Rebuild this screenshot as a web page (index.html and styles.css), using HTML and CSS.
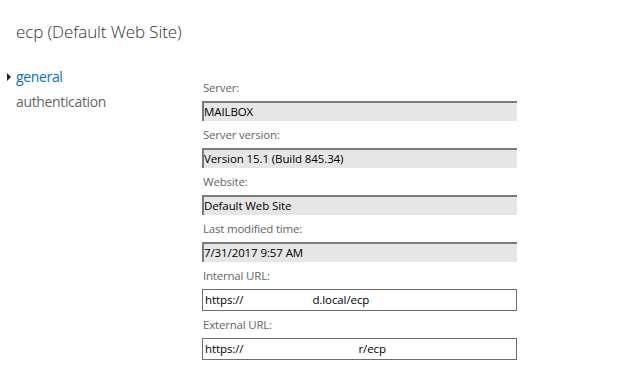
FILE: index.html
```html
<!DOCTYPE html>
<html>
<head>
<meta charset="utf-8">
<link rel="stylesheet" href="styles.css">
</head>
<body>
<h1 class="title">ecp (Default Web Site)</h1>
<div class="main">
  <ul class="nav">
    <li class="nav-item active"><span class="arrow"></span>general</li>
    <li class="nav-item">authentication</li>
  </ul>
  <div class="form">
    <div class="field">
      <div class="label">Server:</div>
      <div class="box readonly">MAILBOX</div>
    </div>
    <div class="field">
      <div class="label">Server version:</div>
      <div class="box readonly">Version 15.1 (Build 845.34)</div>
    </div>
    <div class="field">
      <div class="label">Website:</div>
      <div class="box readonly">Default Web Site</div>
    </div>
    <div class="field">
      <div class="label">Last modified time:</div>
      <div class="box readonly">7/31/2017 9:57 AM</div>
    </div>
    <div class="field">
      <div class="label">Internal URL:</div>
      <div class="box edit"><span class="seg">https://</span><span class="gap1"></span><span class="seg">d.local/ecp</span></div>
    </div>
    <div class="field">
      <div class="label">External URL:</div>
      <div class="box edit"><span class="seg">https://</span><span class="gap2"></span><span class="seg">r/ecp</span></div>
    </div>
  </div>
</div>
</body>
</html>
```
FILE: styles.css
```css
html, body {
  margin: 0;
  padding: 0;
  background: #ffffff;
  font-family: "Open Sans", "Noto Sans", sans-serif;
}
.title {
  margin: 0;
  padding: 20px 0 0 16px;
  font-size: 17px;
  font-weight: 300;
  color: #333333;
  line-height: 24px;
  letter-spacing: -0.1px;
}
.main {
  display: flex;
  margin-top: 20px;
}
.nav {
  list-style: none;
  margin: 0;
  padding: 0 0 0 16px;
  width: 186px;
}
.nav-item {
  position: relative;
  font-size: 14px;
  line-height: 25px;
  color: #666666;
  letter-spacing: -0.35px;
}
.nav-item.active {
  color: #0072c6;
}
.arrow {
  position: absolute;
  left: -9px;
  top: 9px;
  width: 0;
  height: 0;
  border-top: 4px solid transparent;
  border-bottom: 4px solid transparent;
  border-left: 4px solid #222222;
}
.form {
  width: 315px;
  padding-top: 16px;
}
.field {
  margin-bottom: 6px;
}
.label {
  font-size: 11.5px;
  color: #666666;
  line-height: 16px;
  padding-left: 1px;
  margin-bottom: 5px;
  letter-spacing: -0.2px;
}
.box {
  box-sizing: border-box;
  height: 20px;
  font-size: 11.5px;
  line-height: 18px;
  color: #000000;
  padding-left: 0;
  white-space: nowrap;
  letter-spacing: -0.1px;
}
.readonly {
  background: #e6e6e6;
  border-top: 2px solid #7a7a7a;
  border-left: 2px solid #7a7a7a;
}
.edit {
  height: 22px;
  border: 1px solid #6e6e6e;
  line-height: 20px;
  padding-left: 2px;
}
.gap1 {
  display: inline-block;
  width: 69px;
}
.gap2 {
  display: inline-block;
  width: 115px;
}
```
